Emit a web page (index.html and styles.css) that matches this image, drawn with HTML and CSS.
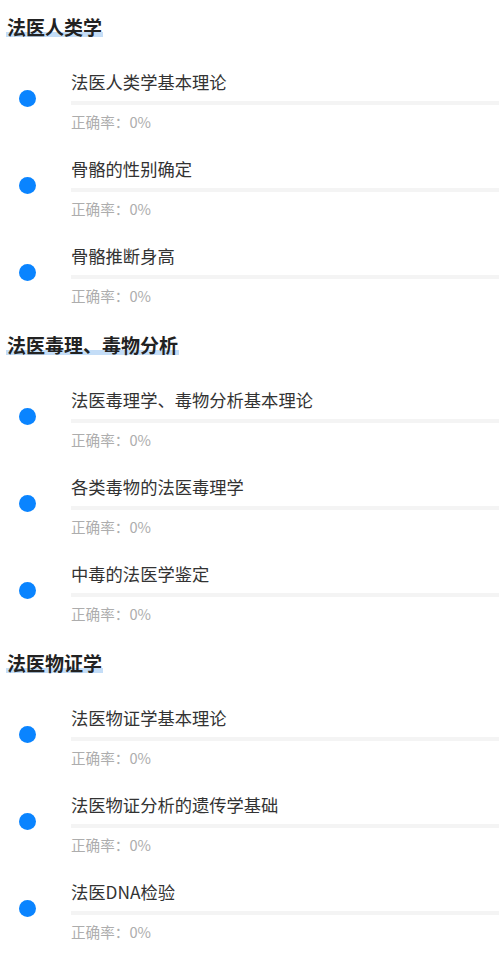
FILE: index.html
```html
<!DOCTYPE html>
<html>
<head>
    <meta charset="utf-8" />
    <title>章节练习</title>
    <link rel="stylesheet" href="styles.css">
</head>
<body>
    <!-- 法医人类学 -->
    <div class="section">
        <div class="section-title"><span>法医人类学</span></div>
        <ul class="list">
            <li class="item">
                <i class="dot"></i>
                <div class="info">
                    <p class="name">法医人类学基本理论</p>
                    <div class="bar"><div class="bar-in" style="width: 0%"></div></div>
                    <p class="rate">正确率：0%</p>
                </div>
            </li>
            <li class="item">
                <i class="dot"></i>
                <div class="info">
                    <p class="name">骨骼的性别确定</p>
                    <div class="bar"><div class="bar-in" style="width: 0%"></div></div>
                    <p class="rate">正确率：0%</p>
                </div>
            </li>
            <li class="item">
                <i class="dot"></i>
                <div class="info">
                    <p class="name">骨骼推断身高</p>
                    <div class="bar"><div class="bar-in" style="width: 0%"></div></div>
                    <p class="rate">正确率：0%</p>
                </div>
            </li>
        </ul>
    </div>
    <!-- 法医毒理、毒物分析 -->
    <div class="section">
        <div class="section-title"><span>法医毒理、毒物分析</span></div>
        <ul class="list">
            <li class="item">
                <i class="dot"></i>
                <div class="info">
                    <p class="name">法医毒理学、毒物分析基本理论</p>
                    <div class="bar"><div class="bar-in" style="width: 0%"></div></div>
                    <p class="rate">正确率：0%</p>
                </div>
            </li>
            <li class="item">
                <i class="dot"></i>
                <div class="info">
                    <p class="name">各类毒物的法医毒理学</p>
                    <div class="bar"><div class="bar-in" style="width: 0%"></div></div>
                    <p class="rate">正确率：0%</p>
                </div>
            </li>
            <li class="item">
                <i class="dot"></i>
                <div class="info">
                    <p class="name">中毒的法医学鉴定</p>
                    <div class="bar"><div class="bar-in" style="width: 0%"></div></div>
                    <p class="rate">正确率：0%</p>
                </div>
            </li>
        </ul>
    </div>
    <!-- 法医物证学 -->
    <div class="section">
        <div class="section-title"><span>法医物证学</span></div>
        <ul class="list">
            <li class="item">
                <i class="dot"></i>
                <div class="info">
                    <p class="name">法医物证学基本理论</p>
                    <div class="bar"><div class="bar-in" style="width: 0%"></div></div>
                    <p class="rate">正确率：0%</p>
                </div>
            </li>
            <li class="item">
                <i class="dot"></i>
                <div class="info">
                    <p class="name">法医物证分析的遗传学基础</p>
                    <div class="bar"><div class="bar-in" style="width: 0%"></div></div>
                    <p class="rate">正确率：0%</p>
                </div>
            </li>
            <li class="item">
                <i class="dot"></i>
                <div class="info">
                    <p class="name">法医DNA检验</p>
                    <div class="bar"><div class="bar-in" style="width: 0%"></div></div>
                    <p class="rate">正确率：0%</p>
                </div>
            </li>
        </ul>
    </div>
</body>
</html>
```

FILE: styles.css
```css
/*清除边距*/
body,div,ul,li,p{
    margin: 0;
    padding: 0;
}
body{
    font-family: "Noto Sans CJK SC", "Noto Sans", sans-serif;
    background-color: #fff;
    color: #333;
}
/*章节*/
.section{
    padding-top: 14px;
}
.section-title{
    height: 26px;
    line-height: 26px;
    margin-bottom: 17px;
    padding-left: 6px;
}
.section-title span{
    display: inline-block;
    font-size: 19px;
    font-weight: bold;
    color: #222;
    padding: 0 1px;
    /*标题下方的浅蓝色高亮*/
    background: linear-gradient(to bottom, transparent 68%, #c4ddf7 68%, #c4ddf7 90%, transparent 90%);
}
/*小节列表*/
.list{
    list-style: none;
}
.item{
    display: flex;
    height: 87px;
    box-sizing: border-box;
    padding-top: 13px;
}
.dot{
    display: block;
    width: 17px;
    height: 17px;
    border-radius: 50%;
    background-color: #0a84ff;
    margin: 20px 35px 0 19px;
    flex-shrink: 0;
}
.info{
    flex: 1;
}
.name{
    font-size: 17.3px;
    line-height: 24px;
    color: #333;
}
.bar{
    height: 4px;
    margin-top: 7px;
    background-color: #f4f4f4;
}
.bar-in{
    height: 100%;
    background-color: #0a84ff;
}
.rate{
    font-size: 14.6px;
    line-height: 20px;
    margin-top: 7px;
    color: #adadad;
}
```
